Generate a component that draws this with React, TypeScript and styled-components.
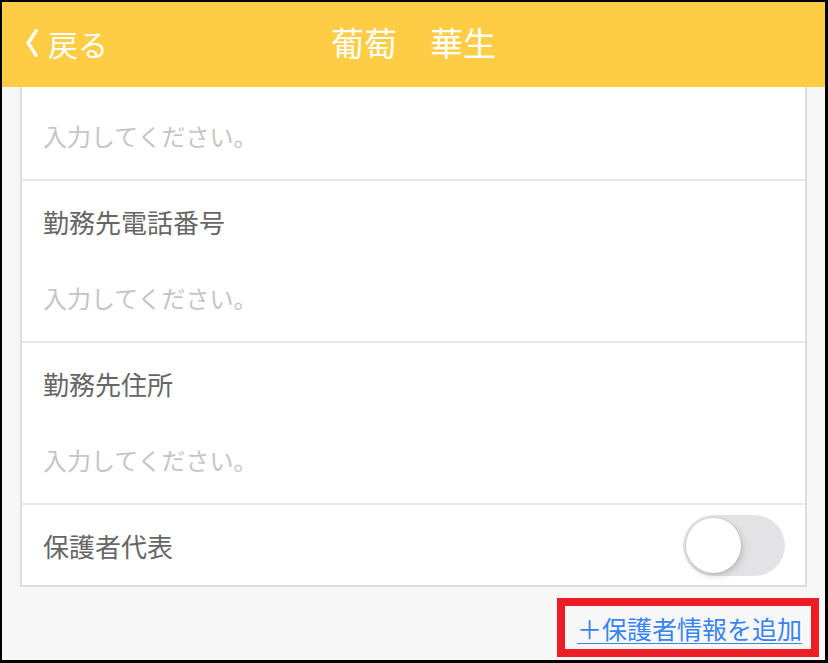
import React from "react";
import styled, { createGlobalStyle } from "styled-components";

const Global = createGlobalStyle`
  html, body { margin: 0; padding: 0; background: #000; }
  body { font-family: "Noto Sans CJK JP", "Noto Sans", sans-serif; }
  #root { padding: 2px 3px 3px 2px; }
`;

const Screen = styled.div`
  width: 823px;
  height: 658px;
  background: #f7f7f7;
  display: flex;
  flex-direction: column;
  overflow: hidden;
`;

const Header = styled.header`
  flex: 0 0 85px;
  background: #fecd45;
  display: grid;
  grid-template-columns: 1fr auto 1fr;
  align-items: center;
  color: #fff;
  position: relative;
  z-index: 2;
`;

const BackButton = styled.button`
  justify-self: start;
  display: flex;
  align-items: center;
  gap: 10px;
  margin-left: 24px;
  padding: 0;
  border: 0;
  background: none;
  color: #fff;
  font-family: inherit;
  font-size: 30px;
  line-height: 1;
  margin-top: -4px;
`;

const Title = styled.h1`
  margin: -4px 0 0;
  font-size: 33px;
  font-weight: 400;
  line-height: 1;
  white-space: pre;
`;

const Content = styled.main`
  flex: 1;
  overflow: hidden;
  display: flex;
  flex-direction: column;
`;

const Card = styled.section<{ $scroll: number }>`
  margin: ${(p) => -p.$scroll}px 18px 0 18px;
  background: #fff;
  border: 2px solid #dddddd;
  border-top: 0;
`;

const Field = styled.div`
  height: 160px;
  border-bottom: 2px solid #e8e8e8;
  padding: 0 21px;
  display: flex;
  flex-direction: column;
`;

const Label = styled.div`
  height: 80px;
  display: flex;
  align-items: center;
  font-size: 26px;
  color: #666666;
`;

const Input = styled.input`
  height: 72px;
  border: 0;
  outline: none;
  padding: 0;
  font-family: inherit;
  font-size: 24px;
  color: #333;
  background: transparent;
  &::placeholder { color: #c5c5c5; }
`;

const ToggleRow = styled.div`
  height: 80px;
  padding: 0 20px 0 21px;
  display: flex;
  align-items: center;
  justify-content: space-between;
`;

const Toggle = styled.div`
  width: 102px;
  height: 61px;
  border-radius: 31px;
  background: #e3e3e5;
  padding: 3px;
  box-sizing: border-box;
  display: flex;
  align-items: center;
`;

const Knob = styled.div`
  width: 55px;
  height: 55px;
  border-radius: 50%;
  background: #fff;
  box-shadow: 0 0 0 1px rgba(0, 0, 0, 0.06), 2px 3px 6px rgba(0, 0, 0, 0.16);
`;

const Footer = styled.div`
  display: flex;
  justify-content: flex-end;
  padding: 11px 6px 0 0;
`;

const AddLink = styled.a`
  box-sizing: border-box;
  height: 59px;
  border: 8px solid #ee1c25;
  padding: 0 9px 0 12px;
  display: flex;
  align-items: center;
  font-size: 25px;
  color: #3884f2;
  text-decoration: underline;
  text-underline-offset: 4px;
  text-decoration-thickness: 1px;
  cursor: pointer;
`;

const fields = ["", "勤務先電話番号", "勤務先住所"];

export default function App() {
  return (
    <>
      <Global />
      <Screen>
        <Header>
          <BackButton>
            <svg width="12" height="28" viewBox="0 0 12 28" fill="none">
              <polyline points="10,1.8 2.2,14 10,26.2" stroke="#fff" strokeWidth="3.4" strokeLinecap="round" strokeLinejoin="round" />
            </svg>
            戻る
          </BackButton>
          <Title>{"葡萄　華生"}</Title>
          <div />
        </Header>
        <Content>
          <Card $scroll={68}>
            {fields.map((f, i) => (
              <Field key={i}>
                <Label>{f}</Label>
                <Input placeholder="入力してください。" />
              </Field>
            ))}
            <ToggleRow>
              <Label>保護者代表</Label>
              <Toggle>
                <Knob />
              </Toggle>
            </ToggleRow>
          </Card>
          <Footer>
            <AddLink>＋保護者情報を追加</AddLink>
          </Footer>
        </Content>
      </Screen>
    </>
  );
}
